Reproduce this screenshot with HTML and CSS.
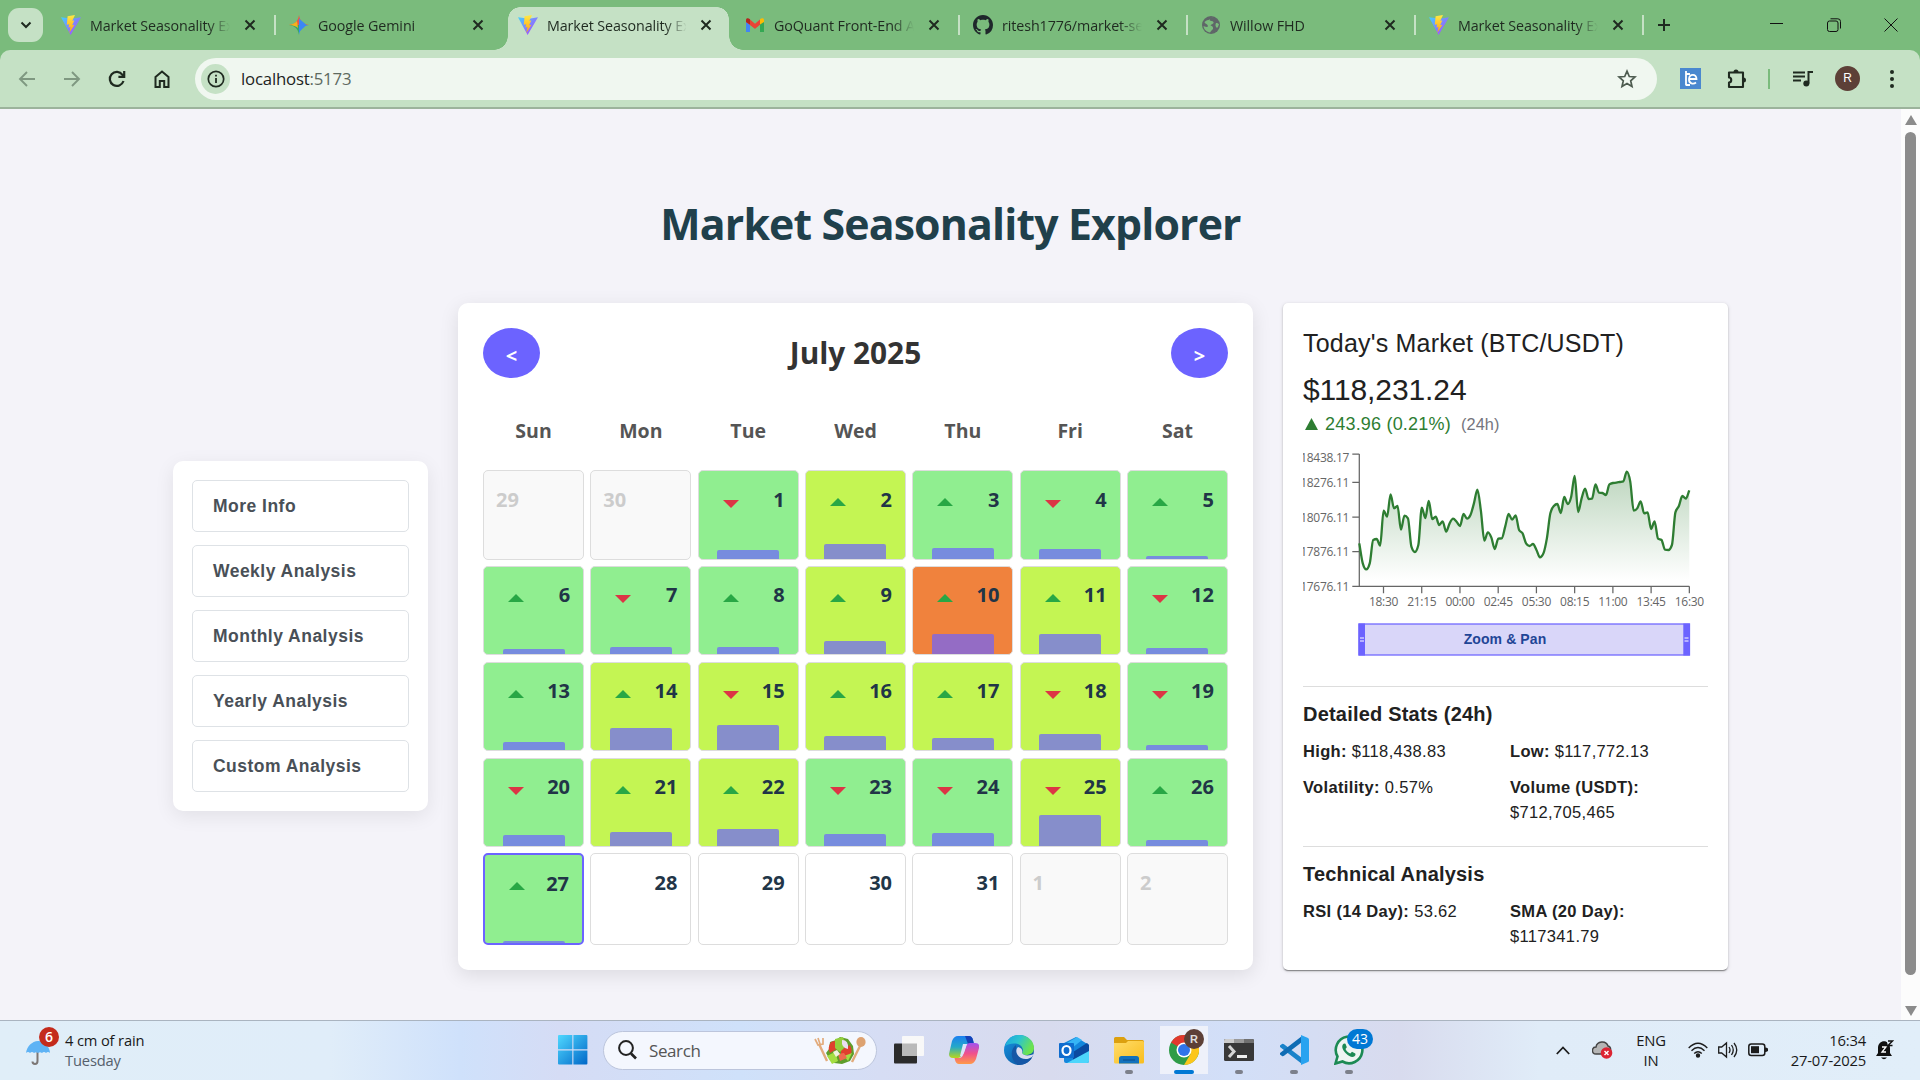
FILE: index.html
```html
<!DOCTYPE html>
<html lang="en">
<head>
<meta charset="utf-8">
<title>Market Seasonality Explorer</title>
<link rel="stylesheet" href="styles.css">
</head>
<body>
<svg class="defs" width="0" height="0" aria-hidden="true">
  <defs>
    <linearGradient id="viteA" x1="0" y1="0" x2="1" y2="1"><stop offset="0" stop-color="#41d1ff"/><stop offset="1" stop-color="#bd34fe"/></linearGradient>
    <linearGradient id="viteB" x1="0" y1="0" x2="0" y2="1"><stop offset="0" stop-color="#ffea45"/><stop offset="1" stop-color="#ffa010"/></linearGradient>
    <linearGradient id="win" x1="0" y1="0" x2="1" y2="1"><stop offset="0" stop-color="#50d8ff"/><stop offset="1" stop-color="#0067c8"/></linearGradient>
    <linearGradient id="cpA" x1="0" y1="0" x2="0" y2="1"><stop offset="0" stop-color="#1b7ff0"/><stop offset=".5" stop-color="#25a9c8"/><stop offset="1" stop-color="#b8d71a"/></linearGradient>
    <linearGradient id="cpB" x1="0" y1="0" x2="0" y2="1"><stop offset="0" stop-color="#a052f0"/><stop offset=".5" stop-color="#f0508c"/><stop offset="1" stop-color="#ff9a48"/></linearGradient>
    <linearGradient id="edgeA" x1="0" y1="0" x2="1" y2=".4"><stop offset="0" stop-color="#1aa3e0"/><stop offset=".5" stop-color="#2cc4cf"/><stop offset="1" stop-color="#6de34e"/></linearGradient>
    <linearGradient id="edgeB" x1="0" y1="0" x2="1" y2="1"><stop offset="0" stop-color="#1597e4"/><stop offset="1" stop-color="#0c4a94"/></linearGradient>
    <linearGradient id="fold" x1="0" y1="0" x2="1" y2="1"><stop offset="0" stop-color="#ffdc6a"/><stop offset="1" stop-color="#f9bd1c"/></linearGradient>
    <linearGradient id="area" x1="0" y1="0" x2="0" y2="1"><stop offset="0.05" stop-color="#2e7d32" stop-opacity=".3"/><stop offset="0.95" stop-color="#2e7d32" stop-opacity="0"/></linearGradient>
    <symbol id="vite" viewBox="0 0 20 20"><path d="M0 2.200 9.600 20 20 2.200 11 3.700z" fill="url(#viteA)"/><path d="M14 0 6.600 1.300 5.800 9.800 8.200 9.200l-.7 3.300 2-.5-1.200 6 5.100-8.200-2.300.5L13.300 5.600l-2 .2z" fill="url(#viteB)"/></symbol>
    <symbol id="close" viewBox="0 0 12 12"><path d="M1.500 1.500l9 9M10.500 1.500l-9 9" stroke="#1f2a20" stroke-width="2" fill="none"/></symbol>
  </defs>
</svg>

<header class="tabstrip">
  <button class="tab-search"><svg width="12" height="8" viewBox="0 0 12 8"><path d="M1.500 1.500 6 6l4.500-4.500" fill="none" stroke="#1f2a20" stroke-width="2"/></svg></button>
  <nav class="tabs">
    <div class="tab"><svg class="fav"><use href="#vite"/></svg><span>Market Seasonality Explorer</span><svg class="x"><use href="#close"/></svg></div>
    <div class="tab bare"><svg class="fav" viewBox="0 0 20 20"><path d="M10 0C10.800 6 14 9.200 20 10H0C6 9.200 9.200 6 10 0z" fill="#e9574a"/><path d="M10 10h10C14 10.800 10.800 14 10 20z" fill="#3186ff"/><path d="M10 10H0C6 10.800 9.200 14 10 20z" fill="#34a66a"/><path d="M10 3.500 17.500 10 10 17z" fill="#3c86f6"/><path d="M0 10c4-.6 6-1.800 8-4l1 7C7 11 4 10.400 0 10z" fill="#f4b31d"/></svg><span>Google Gemini</span><svg class="x"><use href="#close"/></svg></div>
    <div class="tab active bare"><svg class="fav"><use href="#vite"/></svg><span>Market Seasonality Explorer</span><svg class="x"><use href="#close"/></svg></div>
    <div class="tab"><svg class="fav" viewBox="0 0 20 20"><path d="M1 5v12h4V8z" fill="#4285f4"/><path d="M15 8v9h4V5z" fill="#34a853"/><path d="M1 5l9 7 9-7v1l-9 7.800L1 7z" fill="#ea4335"/><path d="M5 4.500l5 4.200 5-4.200v5L10 13.500 5 9.500z" fill="#ea4335"/><path d="M1 7V5c0-2 2-2.500 4-.8v5.200z" fill="#b3261e"/><path d="M19 7V5c0-2-2-2.500-4-.8v5.200z" fill="#fbbc04"/></svg><span>GoQuant Front-End Assignment</span><svg class="x"><use href="#close"/></svg></div>
    <div class="tab"><svg class="fav" viewBox="0 0 16 16"><path fill="#1f272b" d="M8 0C3.580 0 0 3.580 0 8c0 3.540 2.290 6.530 5.470 7.590.4.070.55-.17.55-.38 0-.19-.01-.82-.01-1.490-2.010.37-2.530-.49-2.690-.94-.09-.23-.48-.94-.82-1.130-.28-.15-.68-.52-.01-.53.63-.01 1.080.58 1.230.82.72 1.210 1.870.87 2.330.66.07-.52.28-.87.51-1.070-1.780-.2-3.640-.89-3.640-3.950 0-.87.31-1.590.82-2.150-.08-.2-.36-1.020.08-2.120 0 0 .67-.21 2.200.82.64-.18 1.320-.27 2-.27s1.360.09 2 .27c1.530-1.040 2.200-.82 2.200-.82.44 1.100.16 1.920.08 2.120.51.56.82 1.270.82 2.150 0 3.070-1.870 3.750-3.650 3.950.29.25.54.73.54 1.480 0 1.070-.01 1.930-.01 2.200 0 .21.15.46.55.38A8.010 8.010 0 0 0 16 8c0-4.420-3.580-8-8-8z"/></svg><span>ritesh1776/market-seasonality</span><svg class="x"><use href="#close"/></svg></div>
    <div class="tab"><svg class="fav" viewBox="0 0 20 20"><circle cx="10" cy="10" r="9" fill="#5f6668"/><path d="M12 2c-1 1.500-3 1-3.500 3 1 1.500 3 .5 4 2 .5 2-2 2-3 3.500 2 .5 3 1.500 2.500 3.500-1 1-2 2-3 3.500C6 17 3 15 2.500 11c1 .5 3 1.500 4.500.5C7 9 4 9 3.500 7 5 6 5 5 7.500 5" fill="#7abb7c"/><path d="M15 8c1.500 0 2 .5 3 1-.5 2-1 3-2 4-1.500-1-2-3-1-5z" fill="#7abb7c"/></svg><span>Willow FHD</span><svg class="x"><use href="#close"/></svg></div>
    <div class="tab"><svg class="fav"><use href="#vite"/></svg><span>Market Seasonality Explorer</span><svg class="x"><use href="#close"/></svg></div>
  </nav>
  <svg class="newtab" width="14" height="14" viewBox="0 0 14 14"><path d="M7 1v12M1 7h12" stroke="#1f2a20" stroke-width="2"/></svg>
  <div class="winctl">
    <svg width="14" height="14"><path d="M0 5.500h13" stroke="#111"/></svg>
    <svg width="14" height="14" viewBox="0 0 14 14" fill="none" stroke="#111"><rect x=".5" y="3" width="10.500" height="10.500" rx="2"/><path d="M3.500.8h7.300q2.700 0 2.700 2.700v7"/></svg>
    <svg width="14" height="14" viewBox="0 0 14 14"><path d="M.5.500l13 13M13.500.500l-13 13" stroke="#111"/></svg>
  </div>
</header>

<div class="toolbar">
  <div class="nav-icons">
    <svg width="20" height="20" viewBox="0 0 20 20" fill="none" stroke="#7f9881" stroke-width="1.900"><path d="M18 10H3M10 3l-7 7 7 7"/></svg>
    <svg width="20" height="20" viewBox="0 0 20 20" fill="none" stroke="#7f9881" stroke-width="1.900"><path d="M2 10h15M10 3l7 7-7 7"/></svg>
    <svg width="20" height="20" viewBox="0 0 20 20" fill="none" stroke="#1f2a20" stroke-width="2.200"><path d="M16.500 12A7 7 0 1 1 15.500 5.800L17 7.300M17.200 2v5.800h-5.800"/></svg>
    <svg width="20" height="20" viewBox="0 0 20 20" fill="none" stroke="#1f2a20" stroke-width="2"><path d="M3.500 8 10 2.500 16.500 8v10h-4.300v-6H7.800v6H3.500z"/></svg>
  </div>
  <div class="url">
    <i class="site"><svg width="18" height="18" viewBox="0 0 18 18"><circle cx="9" cy="9" r="7.700" fill="none" stroke="#1f2a20" stroke-width="1.700"/><path d="M9 8v5M9 4.800v1.800" stroke="#1f2a20" stroke-width="1.800"/></svg></i>
    <span class="addr">localhost<b>:5173</b></span>
    <svg class="star" width="20" height="20" viewBox="0 0 20 20"><path d="M10 2.200l2.300 5.300 5.700.5-4.300 3.800 1.300 5.700-5-3-5 3 1.300-5.700L2 8l5.700-.5z" fill="none" stroke="#4d5b4f" stroke-width="1.700"/></svg>
  </div>
  <svg class="ext" width="21" height="21" viewBox="0 0 21 21"><rect width="21" height="21" fill="#4a88cf"/><path d="M6 3v14.500M6 6h4M6 17h4M8.500 11h8c0-5.500-7-5.500-7.500 0-.3 5 4.500 5.500 7 3.500" fill="none" stroke="#fff" stroke-width="1.800"/></svg>
  <svg class="puzzle" width="22" height="22" viewBox="0 0 22 22"><path d="M3 4.500H17V19H3v-4.500c3 0 3-5 0-5z" fill="none" stroke="#1f2a20" stroke-width="2.100" stroke-linejoin="round"/><path d="M7.500 4a2.500 2.500 0 0 1 5 0zM17.500 9.500a2.500 2.500 0 0 1 0 5z" fill="#1f2a20"/></svg>
  <i class="bar-sep"></i>
  <svg class="music" width="20" height="18" viewBox="0 0 20 18"><path d="M0 2.500h12M0 6.500h12M0 10.500h8M15.500 13.500V2H20" fill="none" stroke="#1f2a20" stroke-width="2"/><circle cx="13.300" cy="13.500" r="3" fill="#1f2a20"/></svg>
  <span class="avatar">R</span>
  <svg class="dots" width="6" height="20" viewBox="0 0 6 20" fill="#1f2a20"><circle cx="3" cy="3" r="2"/><circle cx="3" cy="10" r="2"/><circle cx="3" cy="17" r="2"/></svg>
</div>

<div class="viewport">
  <main class="page">
    <h1>Market Seasonality Explorer</h1>
    <div class="columns">
      <aside class="menu">
        <button>More Info</button><button>Weekly Analysis</button><button>Monthly Analysis</button><button>Yearly Analysis</button><button>Custom Analysis</button>
      </aside>
      <section class="calendar">
        <div class="cal-head"><button>&lt;</button><h2>July 2025</h2><button>&gt;</button></div>
        <div class="weekdays"><span>Sun</span><span>Mon</span><span>Tue</span><span>Wed</span><span>Thu</span><span>Fri</span><span>Sat</span></div>
        <div class="days" id="days"></div>
      </section>
      <section class="market">
        <h3>Today's Market (BTC/USDT)</h3>
        <div class="price">$118,231.24</div>
        <div class="change"><svg width="13" height="12" viewBox="0 0 13 12"><path d="M6.500 0 13 12H0z" fill="#2e7d32"/></svg><span>243.96 (0.21%)</span><small>(24h)</small></div>
        <svg class="chart" width="405" height="224" viewBox="1303 448 405 224">
          <g class="axis"><path d="M1359.300 454v132.300H1689.300M1352.300 454h7M1352.300 482.300h7M1352.300 517h7M1352.300 551.700h7M1352.300 586.300h7"/><path id="xticks"/></g>
          <g class="ylab"><text x="1349" y="461.500">118438.17</text><text x="1349" y="486.500">118276.11</text><text x="1349" y="521.500">118076.11</text><text x="1349" y="556">117876.11</text><text x="1349" y="590.500">117676.11</text></g>
          <g class="xlab" id="xlab"></g>
          <path id="fill" fill="url(#area)"/><path id="line" fill="none" stroke="#2e7d32" stroke-width="2.300"/>
          <rect x="1359" y="624" width="330.500" height="31" fill="#d9d6f9" stroke="#6c63ff" stroke-width="1.250"/>
          <path d="M1358.500 623.500h6.500v32h-6.500zM1683.300 623.500h6.500v32h-6.500z" fill="#6c63ff"/>
          <path d="M1360 638h4M1360 641h4M1684.500 638h4M1684.500 641h4" stroke="#fff"/>
          <text class="zoomlab" x="1505" y="644">Zoom &amp; Pan</text>
        </svg>
        <hr>
        <h4>Detailed Stats (24h)</h4>
        <div class="stats"><p><b>High:</b> $118,438.83</p><p><b>Low:</b> $117,772.13</p><p><b>Volatility:</b> 0.57%</p><p><b>Volume (USDT):</b><br>$712,705,465</p></div>
        <hr>
        <h4>Technical Analysis</h4>
        <div class="stats"><p><b>RSI (14 Day):</b> 53.62</p><p><b>SMA (20 Day):</b><br>$117341.79</p></div>
      </section>
    </div>
  </main>
  <div class="scroll"><i class="scroll-up"></i><i class="thumb"></i><i class="scroll-down"></i></div>
</div>

<footer class="taskbar">
  <div class="weather">
    <div class="wicon"><svg width="25" height="25" viewBox="0 0 25 25"><path d="M11.500 12v9c0 4-5 3.500-5 .5" fill="none" stroke="#7c7775" stroke-width="2"/><path d="M0 13C1 6 6 1.500 12 1s12 6 12 12q-2-2-4 0-2-2-4 0-2-1.500-4 0-2-1.500-4 0-2-2-4 0-2-2-4 0z" fill="#5eb3f5"/></svg><b class="badge">6</b></div>
    <div class="wtext"><span>4 cm of rain</span><span class="dim">Tuesday</span></div>
  </div>
  <svg class="start" width="30" height="30" viewBox="0 0 30 30"><path d="M0 1q0-1 1-1h13.300v14.300H0zM15.400 0h13q1 0 1 1v13.300h-14zM0 15.400h14.300v14H1q-1 0-1-1zM15.400 15.400h14v13q0 1-1 1h-13z" fill="url(#win)"/></svg>
  <div class="search">
    <svg width="19" height="20" viewBox="0 0 19 20" fill="none" stroke="#222" stroke-width="2"><circle cx="8" cy="8" r="6.900"/><path d="M13 13.500l5 5" stroke-width="2.600"/></svg>
    <span>Search</span>
    <svg class="salad" width="52" height="28" viewBox="0 0 52 28"><path d="M5 8l8 17M47 8l-9 18" stroke="#e2ab7c" stroke-width="2.400"/><path d="M1 3l3 6 5-1V2M4 2l2 6" stroke="#e2ab7c" stroke-width="1.700" fill="none"/><ellipse cx="47" cy="6" rx="4.600" ry="5" fill="#dda271"/><path d="M12 17l3-4 1-7 6-2 4-3 8 2 5 7 1 8-4 7-8 3-8-1-4-3z" fill="#5f9e2b"/><path d="M17 6q-4 6-1 11l10-6-2-7zM27 14l9-5q4 8-2 12l-7-1z" fill="#e0402d"/><path d="M21 3l8-2 3 9-6 6-5-4z" fill="#94cf3c"/><path d="M28 4q7 0 6 9-7-1-6-9z" fill="#eadff0"/><path d="M13 20l8-4 3 9-6 3zM30 20l8-3-4 8z" fill="#a4de42"/><path d="M24 18l6-1 3 5-7 3z" fill="#ef6a4f"/><path d="M19 16l4-2 3 4-4 3z" fill="#f0f2dc"/></svg>
  </div>
  <div class="apps">
    <div><svg viewBox="0 0 30 30"><rect x="0" y="8.500" width="23" height="20" rx="1" fill="#2b2b2b"/><rect x="8" y="1" width="22" height="20" rx="1" fill="#f8f8f8"/><path d="M8 8.500h15V21H8z" fill="#b9b9b9"/></svg></div>
    <div><svg viewBox="0 0 30 30"><path d="M9 1h11q3 0 4 4l1 4h-6q-3 0-4 3l-3 9q-1 2-3 2H4q-4 0-4-4l3-13Q5 1 9 1z" fill="url(#cpA)"/><path d="M16 1h4q3 0 4 4l1 4h-6z" fill="#1541b8"/><path d="M21 29H10q-3 0-4-4l-.5-2H10q3 0 4-3l3-9q1-3 4-3h5q5 0 4 5l-3 11q-2 5-6 5z" fill="url(#cpB)"/><path d="M14 9h4l-3 9-2 3h-2z" fill="#dbe3fa"/></svg></div>
    <div><svg viewBox="0 0 30 30"><circle cx="15" cy="15" r="15" fill="url(#edgeB)"/><path d="M1 11C4 3 9 0 15 0c9 0 15 6 15 13 0 5-4 7-8 7-3 0-4-1-4-2 2-2 1-7-4-9-5-1-10 0-13 2z" fill="url(#edgeA)"/><path d="M12 10c-7 5-5 17 3 20 6 0 10-3 13-7-5 3-16 3-16-13z" fill="#1557a6"/><path d="M14 12c-3 3-2 8 3 11 4 2 8 1 11-1l2-3c-4 2-11 2-12-1 1-2 0-5-4-6z" fill="#d8dcf0"/></svg></div>
    <div><svg viewBox="0 0 30 30"><path d="M5 8 17 2l13 8v16q0 2-2 2H7q-2 0-2-2z" fill="#1487dc"/><path d="M8 8 18 2l5 3-10 8z" fill="#36b5f5"/><path d="M30 10v7l-16 8V17l14-9z" fill="#0b4aa0"/><path d="M30 16v10q0 2-2 2H8z" fill="#4dd6fb"/><rect y="8" width="15" height="15" rx="1" fill="#0f6cce"/><ellipse cx="7.500" cy="15.500" rx="4" ry="4.500" fill="none" stroke="#fff" stroke-width="2.200"/></svg></div>
    <div class="run"><svg viewBox="0 0 30 30"><path d="M0 3.500Q0 2 1.500 2H10l3 3h15.500Q30 5 30 7v4H0z" fill="#dca00f"/><path d="M0 8h12l2-2h14.500Q30 6 30 7.500V27q0 1.500-1.500 1.500h-27Q0 28.500 0 27z" fill="url(#fold)"/><path d="M5 28.500v-5q0-2.500 2.500-2.500h15q2.500 0 2.500 2.500v5z" fill="#1272bd"/><path d="M9 25h12" stroke="#0b4b8a"/></svg></div>
    <div class="run chrome"><svg viewBox="0 0 30 30"><circle cx="15" cy="15" r="15" fill="#2f9c48"/><path d="M15 15 2 7.500A15 15 0 0 1 28 7.500z" fill="#e2392e"/><path d="M15 7.500h13A15 15 0 0 1 15 30l6.500-11z" fill="#fcc61b"/><circle cx="15" cy="15" r="7.500" fill="#fff"/><circle cx="15" cy="15" r="6" fill="#2f74ea"/></svg><b class="prof">R</b></div>
    <div class="run"><svg viewBox="0 0 30 30"><rect y="4" width="30" height="22" rx="1.500" fill="#383838"/><path d="M0 8V5.500Q0 4 1.500 4H10v4z" fill="#ccc"/><path d="M10 4h10v4H10z" fill="#9a9a9a"/><path d="M20 4h8.500Q30 4 30 5.500V8H20z" fill="#707070"/><path d="M5 11l5 5.500L5 22" fill="none" stroke="#d5d5d5" stroke-width="3"/><path d="M13 21.500h10" stroke="#eee" stroke-width="3"/></svg></div>
    <div class="run"><svg viewBox="0 0 30 30"><path d="M1 10.500 3 9q1-.6 2 .2L23 23v6L1 12z" fill="#1a83ca"/><path d="M1 19.500 3 21q1 .6 2-.2L23 7V1L1 18z" fill="#0f6cb4"/><path d="M22 0l7 3q1 .5 1 1.500v21q0 1-1 1.500l-7 3z" fill="#29a3f0"/></svg></div>
    <div class="run"><svg viewBox="0 0 30 30"><path d="M1.500 28.500l2-7A13.300 13.300 0 1 1 8.500 26.500z" fill="#eef5f2" stroke="#1c8a54" stroke-width="2.600"/><path d="M10 8.500c-3 2-2 6 2 10s8 4.500 9.500 1.500l-.2-1.500-3.300-1.700-1.700 1.700c-2-.7-4-2.500-4.800-4.500l1.300-1.800-1.300-3.500z" fill="#1c8a54"/></svg><b class="count">43</b></div>
  </div>
  <div class="tray">
    <svg class="caret" width="14" height="9" viewBox="0 0 14 9"><path d="M.8 8 7 1.500 13.200 8" fill="none" stroke="#1c1c1c" stroke-width="1.800"/></svg>
    <svg class="cloud" width="21" height="18" viewBox="0 0 21 18"><path d="M4 13C-1 13-.5 6 4 6 5 0 14-1 16 5c4 1 3 8 0 8z" fill="#b5b5b5" stroke="#444" stroke-width="1.500"/><circle cx="14.500" cy="12" r="5.800" fill="#dc2433"/><path d="M12.500 10l4 4M16.500 10l-4 4" stroke="#fff" stroke-width="1.400"/></svg>
    <div class="lang"><span>ENG</span><span>IN</span></div>
    <svg class="wifi" width="20" height="16" viewBox="0 0 20 16" fill="none" stroke="#1c1c1c" stroke-width="1.400"><path d="M.7 6Q10-3.500 19.300 6M3.500 8.800q6.500-6.400 13 0M6.200 11.600q3.800-3.800 7.600 0"/><circle cx="10" cy="13.500" r="1.500" fill="#1c1c1c"/></svg>
    <svg class="vol" width="20" height="18" viewBox="0 0 20 18" fill="none" stroke="#1c1c1c" stroke-width="1.300"><path d="M.7 6h3L8.500 2v14L3.700 12h-3zM11 6q2 3 0 6M13.500 4q3.500 5 0 10M16 2q5.500 7 0 14"/></svg>
    <svg class="bat" width="20" height="14" viewBox="0 0 20 14"><rect x=".8" y="1" width="16" height="11.500" rx="2.500" fill="none" stroke="#1c1c1c" stroke-width="1.500"/><rect x="3" y="3.200" width="8" height="7" fill="#1c1c1c"/><path d="M17 4.500h1l2 1v2.500l-2 1h-1z" fill="#1c1c1c"/></svg>
    <div class="clock"><span>16:34</span><span>27-07-2025</span></div>
    <svg class="bell" width="18" height="20" viewBox="0 0 18 20"><path d="M0 16l2-3V8c0-9 12-9 12 0v5l2 3zM5 17.500h6q-3 3.500-6 0z" fill="#111"/><path d="M6 7h4l-4 5h4" fill="none" stroke="#fff" stroke-width="1.300"/><path d="M10.500 0H18v6h-6z" fill="#e1edf8"/><path d="M12 1h4.500l-4.500 4.500h4.500" fill="none" stroke="#111" stroke-width="1.400"/></svg>
  </div>
</footer>
<script src="app.js"></script>
</body>
</html>
```
FILE: styles.css
```css
* { box-sizing: border-box; }
body { margin: 0; width: 1920px; height: 1080px; overflow: hidden; display: flex; flex-direction: column; font-family: "Open Sans", "Noto Sans", sans-serif; background: #f4f3f9; }
button { font: inherit; border: 0; padding: 0; }
svg { display: block; flex: none; }
h1, h2, h3, h4, p { margin: 0; }
.defs { position: absolute; }

.tabstrip { height: 50px; background: #7abb7c; display: flex; align-items: center; padding-left: 8px; flex: none; }
.tab-search { width: 35px; height: 34px; border-radius: 11px; background: #c5e1c5; display: flex; align-items: center; justify-content: center; }
.tabs { display: flex; height: 50px; margin-left: 5px; }
.tab { width: 228px; height: 50px; display: flex; align-items: center; padding-left: 13px; position: relative; font-size: 14.3px; letter-spacing: -.1px; color: #1f2a20; }
.tab .fav { width: 20px; height: 20px; }
.tab span { width: 141px; margin-left: 9px; white-space: nowrap; overflow: hidden; -webkit-mask-image: linear-gradient(90deg, #000 118px, transparent 140px); mask-image: linear-gradient(90deg, #000 118px, transparent 140px); }
.tab .x { width: 12px; height: 12px; margin-left: 14px; }
.tab::after { content: ""; width: 2px; height: 20px; background: #c5e1c5; margin-left: 18px; }
.tab.bare::after { visibility: hidden; }
.tab.active { z-index: 1; padding-left: 14px; }
.tab.active::before { content: ""; position: absolute; z-index: -1; left: -10px; right: -11px; top: 7px; bottom: 0; background:
  radial-gradient(circle at 0 0, transparent 13.5px, #c5e1c5 14px) left bottom / 14px 14px no-repeat,
  radial-gradient(circle at 100% 0, transparent 13.5px, #c5e1c5 14px) right bottom / 14px 14px no-repeat; }
.tab.active { background: linear-gradient(#c5e1c5, #c5e1c5) 4px 19px / 221px 31px no-repeat, radial-gradient(circle at 12px 12px, #c5e1c5 11.5px, transparent 12px) 4px 7px / 12px 12px no-repeat, radial-gradient(circle at 0 12px, #c5e1c5 11.5px, transparent 12px) 213px 7px / 12px 12px no-repeat, linear-gradient(#c5e1c5, #c5e1c5) 16px 7px / 197px 12px no-repeat; }
.newtab { margin-left: 13px; }
.winctl { display: flex; gap: 43px; margin-left: auto; margin-right: 22px; }

.toolbar { height: 59px; flex: none; background: #c5e1c5; border-bottom: 2px solid #9cb39c; border-radius: 10px 10px 0 0; display: flex; align-items: center; position: relative; }
.toolbar::before { content: ""; position: absolute; z-index: -1; inset: 0 0 auto; height: 20px; background: #7abb7c; }
.nav-icons { display: flex; gap: 25px; padding-left: 17px; width: 195px; flex: none; }
.url { width: 1462px; height: 42px; border-radius: 21px; background: #f0f7f0; display: flex; align-items: center; padding: 0 20px 0 6px; }
.site { width: 29px; height: 30px; border-radius: 50%; background: #c5e1c5; display: flex; align-items: center; justify-content: center; }
.addr { margin-left: 11px; font-size: 16.8px; letter-spacing: -.2px; color: #1d231e; }
.addr b { font-weight: 400; color: #5e6a60; }
.star { margin-left: auto; }
.ext { margin-left: 23px; }
.puzzle { margin-left: 25px; }
.bar-sep { width: 2px; height: 20px; background: #7abb7c; margin-left: 20px; }
.music { margin-left: 23px; }
.avatar { width: 25px; height: 25px; border-radius: 50%; background: #5d4037; color: #fff; font: 12px/25px "Liberation Sans", sans-serif; text-align: center; margin-left: 22px; }
.dots { margin-left: 29px; }

.viewport { flex: 1; display: flex; min-height: 0; }
.page { width: 1901px; display: flex; flex-direction: column; align-items: center; padding-top: 85px; background: #f4f3f9; }
h1 { height: 62px; line-height: 60px; margin-bottom: 47px; font-size: 42.8px; letter-spacing: -.85px; font-weight: 700; color: #20404b; }
.columns { display: flex; gap: 30px; align-items: center; }
.menu { width: 255px; height: 350px; border-radius: 10px; background: #fff; box-shadow: 0 5px 19px rgba(0,0,0,.08); padding: 19px; margin-bottom: 1px; display: flex; flex-direction: column; gap: 13px; }
.menu button { flex: 1; border: 1px solid #dee2e6; border-radius: 5px; background: #fff; text-align: left; padding-left: 20px; font: bold 17.5px "Liberation Sans", sans-serif; letter-spacing: .48px; color: #495057; }
.calendar { width: 795px; height: 667px; border-radius: 10px; background: #fff; box-shadow: 0 5px 19px rgba(0,0,0,.1); padding: 25px; }
.cal-head { display: flex; justify-content: space-between; align-items: center; height: 50px; }
.cal-head button { width: 57px; height: 50px; border-radius: 50%; background: #6c63ff; color: #fff; font-size: 20px; font-weight: 700; padding-top: 4px; }
h2 { font-size: 29.8px; line-height: 52px; font-weight: 700; color: #333; }
.weekdays { display: grid; grid-template-columns: repeat(7, 1fr); gap: 6.25px; height: 92px; padding-top: 38px; line-height: 30px; text-align: center; font-size: 19.5px; font-weight: 700; color: #555; }
.days { display: grid; grid-template-columns: repeat(7, 1fr); grid-template-rows: repeat(4, 89.6px) 91.6px; gap: 6.25px; }
.day { border: 1px solid #ddd; border-radius: 5px; background: #fff; display: flex; flex-direction: column; justify-content: space-between; align-items: center; overflow: hidden; }
.day .top { width: 100%; height: 28px; display: flex; justify-content: space-between; align-items: center; padding: 0 13px 0 24px; margin-top: 14.6px; font-size: 20px; line-height: 28px; font-weight: 700; color: #213547; }
.day .num { margin-left: auto; }
.day.other { background: #f9f9f9; }
.day.other .top { color: #ccc; padding-left: 12px; }
.day.other .num { margin-left: 0; }
.day.low { background: #90ee90; }
.day.mid { background: #c4f553; }
.day.high { background: #f0823d; }
.day.today { border: 2px solid #6c63ff; }
.day .bar { width: 62px; border-radius: 2px 2px 0 0; background: rgba(108,99,255,.7); }
.arrow { border: 8.500px solid transparent; }
.arrow.rise { border-top-width: 0; border-bottom-color: #28a745; margin-top: 5px; }
.arrow.fall { border-bottom-width: 0; border-top-color: #dc3545; margin-top: 8px; }

.market { width: 445px; height: 667px; border-radius: 5px; background: #fff; box-shadow: 0 2px 1px -1px rgba(0,0,0,.3), 0 1px 2px rgba(0,0,0,.2), 0 1px 4px rgba(0,0,0,.12); padding: 20px; font-family: "Liberation Sans", Arial, sans-serif; color: #212121; }
h3 { font-size: 25px; font-weight: 400; line-height: 40px; letter-spacing: .2px; }
.price { font-size: 30px; line-height: 40px; margin-top: 7px; letter-spacing: -.1px; }
.change { display: flex; align-items: center; height: 25px; margin-top: 1px; color: #2e7d32; font-size: 18px; letter-spacing: .2px; padding-left: 2px; }
.change span { margin-left: 7px; line-height: 27px; padding-top: 1px; }
.change small { margin-left: 10px; font-size: 16.3px; color: #75757d; letter-spacing: .15px; padding-top: 1px; }
.chart { margin-top: 12px; }
.axis path { fill: none; stroke: #666; stroke-width: 1.250; }
.ylab, .xlab { font: 12px "Open Sans", sans-serif; letter-spacing: -.3px; fill: #666; }
.ylab { text-anchor: end; }
.xlab { text-anchor: middle; }
.zoomlab { font: bold 14px "Liberation Sans", sans-serif; text-anchor: middle; letter-spacing: .1px; fill: #1f4596; }
hr { border: 0; height: 1px; background: #ddd; margin: 14px 0 11px; }
h4 { font-size: 20px; line-height: 32px; letter-spacing: .2px; margin-bottom: 9px; }
.stats { display: grid; grid-template-columns: 207px 1fr; row-gap: 11px; font-size: 16.5px; line-height: 25px; letter-spacing: .34px; margin-bottom: 21px; }

.scroll { width: 19px; background: #fcfcfc; display: flex; flex-direction: column; align-items: center; padding: 6px 0 4px; }
.scroll-up, .scroll-down { border: 6px solid transparent; }
.scroll-up { border-top: 0; border-bottom: 10px solid #8b8b8b; }
.scroll-down { border-bottom: 0; border-top: 10px solid #8b8b8b; }
.thumb { width: 11px; height: 844px; border-radius: 6px; background: #8b8b8b; margin: 7px 0 31px; }

.taskbar { height: 60px; flex: none; border-top: 1px solid #aab4c0; display: flex; align-items: center; color: #191919; background: linear-gradient(90deg, #e0eef8 0, #e0edf9 330px, #cfe1fb 460px, #d5dcf5 560px, #cfe1fa 740px, #d6ddf4 880px, #d8dbee 1050px, #d2dff8 1230px, #d8dbee 1400px, #e0ecf8 1540px, #e1eef9 100%); }
.taskbar > * { margin-bottom: 1px; }
.weather { width: 557px; display: flex; padding-left: 26px; flex: none; }
.wicon { width: 39px; padding-top: 10px; position: relative; }
.badge { position: absolute; left: 13px; top: -3px; width: 20px; height: 20px; border-radius: 50%; background: #c42b1c; color: #fff; font-size: 14px; line-height: 20px; text-align: center; font-weight: 600; }
.wtext span { display: block; font-size: 14.7px; line-height: 20px; letter-spacing: -.15px; }
.wtext .dim { color: #55606c; }
.start { margin-left: 1px; }
.search { width: 274px; height: 39px; margin-left: 15px; border: 1px solid #bcc5dc; border-radius: 20px; background: #f4f7fe; display: flex; align-items: center; padding: 0 10px 0 14px; flex: none; }
.search span { margin: 0 auto 0 12px; font-size: 17px; letter-spacing: -.4px; color: #555; }
.apps { display: flex; margin-left: 4px; }
.apps div { width: 55px; height: 48px; display: flex; align-items: center; justify-content: center; position: relative; }
.apps svg { width: 30px; height: 30px; }
.run::after { content: ""; position: absolute; bottom: 0; left: 23.500px; width: 8px; height: 4px; border-radius: 2px; background: #7c808b; }
.chrome { background: linear-gradient(#eef1fa, #eef1fa) center / 48px 48px no-repeat; }
.chrome::after { left: 17.500px; width: 20px; background: #0078d4; }
.prof { position: absolute; left: 28px; top: 3px; width: 20px; height: 20px; border-radius: 50%; background: #5d4037; color: #ddd; font: bold 11px/20px "Liberation Sans", sans-serif; text-align: center; }
.count { position: absolute; left: 26px; top: 3px; width: 26px; height: 20px; border-radius: 10px; background: #0078d4; color: #fff; font-size: 14px; line-height: 20px; text-align: center; font-weight: 400; }
.tray { margin-left: auto; display: flex; align-items: center; padding-right: 26px; }
.tray span { display: block; font-size: 14.8px; line-height: 20px; letter-spacing: -.2px; }
.cloud { margin-left: 22px; }
.lang { width: 40px; margin-left: 18px; text-align: center; }
.wifi { margin-left: 17px; }
.vol { margin-left: 10px; }
.bat { margin-left: 10px; }
.clock { width: 90px; margin-left: 8px; text-align: right; }
.bell { margin-left: 10px; }
```
FILE: app.js
```js
// [number, volatility class, direction, volume bar height]
const days = [
  [29, 'other'], [30, 'other'], [1, 'low', 'fall', 9], [2, 'mid', 'rise', 15], [3, 'low', 'rise', 11], [4, 'low', 'fall', 10], [5, 'low', 'rise', 3],
  [6, 'low', 'rise', 5], [7, 'low', 'fall', 7], [8, 'low', 'rise', 7], [9, 'mid', 'rise', 13], [10, 'high', 'rise', 20], [11, 'mid', 'rise', 20], [12, 'low', 'fall', 6],
  [13, 'low', 'rise', 8], [14, 'mid', 'rise', 22], [15, 'mid', 'fall', 25], [16, 'mid', 'rise', 14], [17, 'mid', 'rise', 12], [18, 'mid', 'fall', 16], [19, 'low', 'fall', 5],
  [20, 'low', 'fall', 11], [21, 'mid', 'rise', 14], [22, 'mid', 'rise', 17], [23, 'low', 'fall', 12], [24, 'low', 'fall', 13], [25, 'mid', 'fall', 31], [26, 'low', 'rise', 6],
  [27, 'low today', 'rise', 2], [28, ''], [29, ''], [30, ''], [31, ''], [1, 'other'], [2, 'other'],
];
document.getElementById('days').innerHTML = days.map(([n, cls, dir, h]) =>
  `<div class="day ${cls}"><div class="top">${dir ? `<i class="arrow ${dir}"></i>` : ''}<span class="num">${n}</span></div>${h ? `<div class="bar" style="height:${h}px"></div>` : ''}</div>`).join('');

// Price samples every 15 minutes, as depth below the plot origin in thirds of a pixel.
const depth = [730,790,808,790,720,717,737,632,650,583,625,618,689,647,655,740,756,735,623,654,603,657,650,675,664,695,670,656,665,678,642,656,645,610,569,632,722,697,712,747,716,715,680,642,659,646,690,700,730,738,732,750,772,760,715,640,618,612,639,591,612,590,528,636,595,566,597,596,553,578,579,585,553,549,548,546,544,515,545,632,625,604,640,637,687,664,716,720,749,750,735,637,618,588,596,571];
const step = 330 / (depth.length - 1);
const p = depth.map((d, i) => [1359.3 + i * step, 300 + d / 3]);
// Monotone cubic interpolation.
const s = p.slice(1).map((q, i) => (q[1] - p[i][1]) / step);
const m = p.map((_, i) => {
  if (i === 0) return s[0];
  if (i === p.length - 1) return s[i - 1];
  const a = s[i - 1], b = s[i];
  return a * b <= 0 ? 0 : Math.sign(a) * Math.min(Math.abs(a), Math.abs(b), Math.abs(a + b) / 4) * 2;
});
let d = `M${p[0]}`;
for (let i = 1; i < p.length; i++) {
  const [x0, y0] = p[i - 1], [x1, y1] = p[i];
  d += `C${x0 + step / 3},${y0 + m[i - 1] * step / 3} ${x1 - step / 3},${y1 - m[i] * step / 3} ${x1},${y1}`;
}
document.getElementById('line').setAttribute('d', d);
document.getElementById('fill').setAttribute('d', d + 'V586.3H1359.3Z');

const times = ['18:30', '21:15', '00:00', '02:45', '05:30', '08:15', '11:00', '13:45', '16:30'];
const tx = times.map((_, i) => 1383.5 + i * 38.23);
document.getElementById('xticks').setAttribute('d', tx.map(x => `M${x} 586.3v7`).join(''));
document.getElementById('xlab').innerHTML = times.map((t, i) => `<text x="${tx[i]}" y="606">${t}</text>`).join('');
```
